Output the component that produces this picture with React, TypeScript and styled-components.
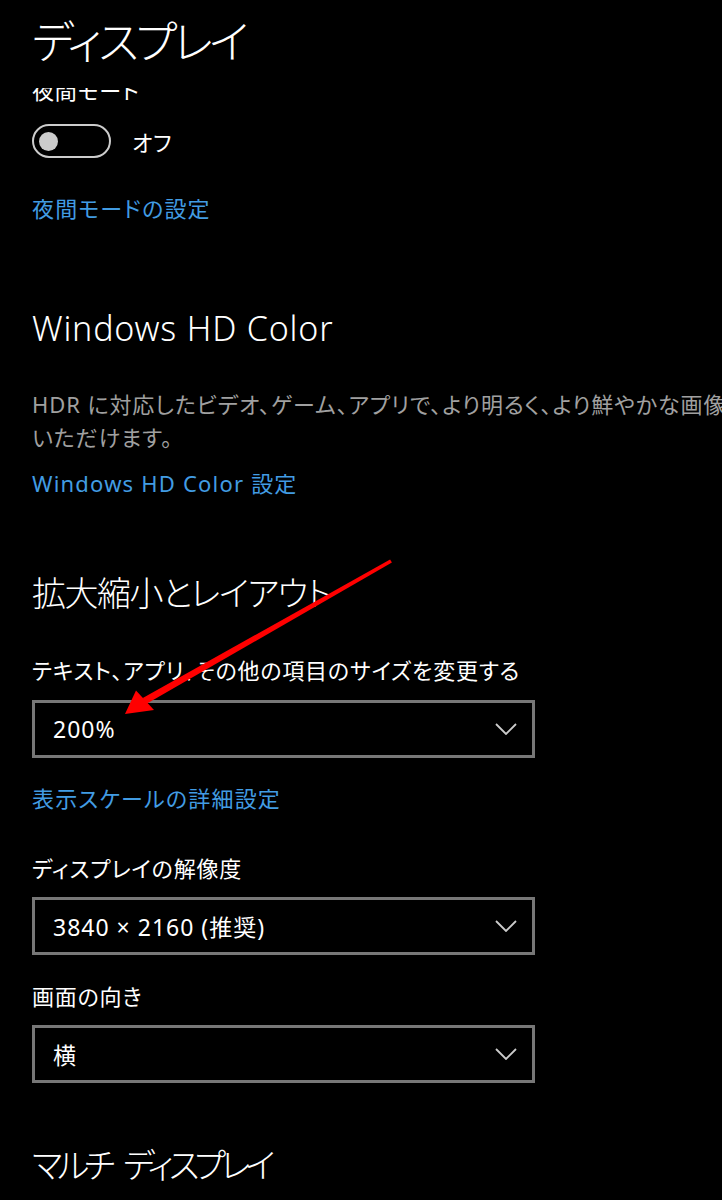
import styled, { createGlobalStyle } from "styled-components";

const GlobalStyle = createGlobalStyle`
    body{
        margin:0;
        background:#000;
        overflow:hidden;
    }
    *{
        box-sizing:border-box;
    }
`;

const Page = styled.div`
    position:relative;
    display:flex;
    flex-direction:column;
    width:722px;
    height:1200px;
    overflow:hidden;
    background:#000;
    color:#fff;
    font-family:"Noto Sans","Noto Sans CJK JP",sans-serif;
    font-feature-settings:"palt";
`;

const Header = styled.header`
    display:flex;
    align-items:center;
    height:88px;
    padding:0 32px 6px;
    background:#000;
    flex-shrink:0;
`;

const Title = styled.h1`
    margin:0;
    font-size:45px;
    font-weight:300;
    line-height:1;
    letter-spacing:-3.6px;
`;

const Viewport = styled.div`
    flex:1;
    overflow:hidden;
`;

const Content = styled.div`
    display:flex;
    flex-direction:column;
    align-items:flex-start;
    margin-top:-13px;
    padding:0 32px;
`;

const FieldLabel = styled.div<{ $top?: number }>`
    margin-top:${p => p.$top ?? 0}px;
    font-size:22px;
    line-height:30px;
    letter-spacing:0.8px;
`;

const ToggleRow = styled.div<{ $top: number }>`
    display:flex;
    align-items:center;
    gap:21px;
    margin-top:${p => p.$top}px;
    font-size:22px;
    letter-spacing:0.8px;
`;

const Toggle = styled.div`
    display:flex;
    align-items:center;
    width:79px;
    height:34px;
    padding-left:5px;
    border:2.5px solid #cccccc;
    border-radius:17px;
`;

const Knob = styled.span`
    width:19px;
    height:19px;
    border-radius:50%;
    background:#cccccc;
`;

const LinkText = styled.a<{ $top: number }>`
    margin-top:${p => p.$top}px;
    color:#429ce3;
    font-size:22px;
    line-height:30px;
    letter-spacing:1.2px;
    text-decoration:none;
`;

const SectionHeading = styled.h2<{ $top: number; $spacing: number; $wordGap?: number }>`
    margin:${p => p.$top}px 0 0;
    font-size:34px;
    font-weight:300;
    line-height:44px;
    letter-spacing:${p => p.$spacing}px;
    word-spacing:${p => p.$wordGap ?? 0}px;
`;

const Description = styled.p<{ $top: number }>`
    margin:${p => p.$top}px 0 0;
    color:#a0a0a0;
    font-size:22px;
    line-height:33px;
    letter-spacing:0.9px;
    white-space:nowrap;
`;

const Select = styled.div<{ $top: number }>`
    display:flex;
    align-items:center;
    justify-content:space-between;
    width:503px;
    height:58px;
    margin-top:${p => p.$top}px;
    padding:0 15px 0 18px;
    border:3px solid #777777;
    font-size:23px;
    letter-spacing:1px;
`;

const Chevron = () => (
    <svg width="22" height="12" viewBox="0 0 22 12">
        <polyline points="1,1 11,11 21,1" fill="none" stroke="#cccccc" strokeWidth="1.8" />
    </svg>
);

const Overlay = styled.svg`
    position:absolute;
    left:0;
    top:0;
    pointer-events:none;
`;

// red call-out arrow pointing at the scale dropdown
const Arrow = () => (
    <Overlay width="722" height="1200" viewBox="0 0 722 1200">
        <polygon points="391.9,562.6 390.1,559.4 142.8,698 146.2,704" fill="#ff0000" />
        <polygon points="125,714 136,690.5 154,710" fill="#ff0000" />
    </Overlay>
);

function App() {
    return (
        <Page>
            <GlobalStyle />
            <Header>
                <Title>ディスプレイ</Title>
            </Header>
            <Viewport>
                <Content>
                    <FieldLabel>夜間モード</FieldLabel>
                    <ToggleRow $top={19}>
                        <Toggle><Knob /></Toggle>
                        <span>オフ</span>
                    </ToggleRow>
                    <LinkText $top={35}>夜間モードの設定</LinkText>

                    <SectionHeading $top={83} $spacing={0.8}>Windows HD Color</SectionHeading>
                    <Description $top={38}>
                        HDR に対応したビデオ、ゲーム、アプリで、より明るく、より鮮やかな画像をお楽しみ
                        <br />
                        いただけます。
                    </Description>
                    <LinkText $top={14}>Windows HD Color 設定</LinkText>

                    <SectionHeading $top={73} $spacing={-1.5}>拡大縮小とレイアウト</SectionHeading>
                    <FieldLabel $top={40}>テキスト、アプリ、その他の項目のサイズを変更する</FieldLabel>
                    <Select $top={15}>
                        <span>200%</span>
                        <Chevron />
                    </Select>
                    <LinkText $top={25}>表示スケールの詳細設定</LinkText>
                    <FieldLabel $top={40}>ディスプレイの解像度</FieldLabel>
                    <Select $top={14}>
                        <span>3840 × 2160 (推奨)</span>
                        <Chevron />
                    </Select>
                    <FieldLabel $top={26}>画面の向き</FieldLabel>
                    <Select $top={14}>
                        <span>横</span>
                        <Chevron />
                    </Select>

                    <SectionHeading $top={60} $spacing={-5} $wordGap={9}>マルチ ディスプレイ</SectionHeading>
                </Content>
            </Viewport>
            <Arrow />
        </Page>
    );
}

export default App;
